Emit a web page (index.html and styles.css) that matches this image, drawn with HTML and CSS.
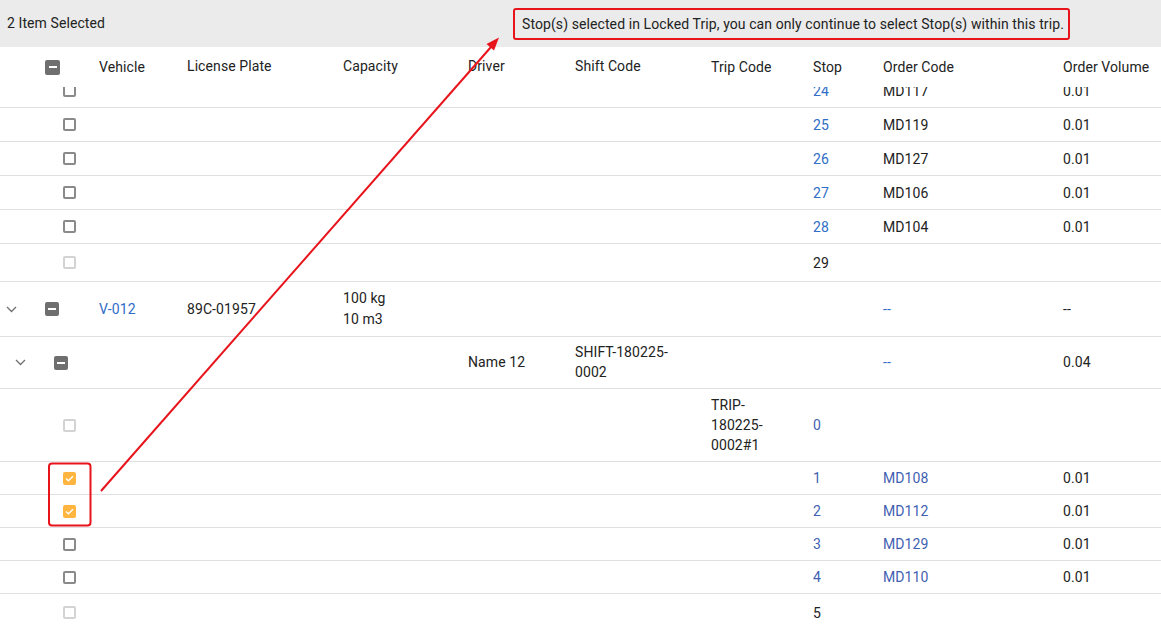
FILE: index.html
```html
<!DOCTYPE html>
<html>
<head>
<meta charset="utf-8">
<link rel="stylesheet" href="styles.css">
</head>
<body>
<div class="topbar">
  <span class="selected-count">2 Item Selected</span>
  <div class="notice">Stop(s) selected in Locked Trip, you can only continue to select Stop(s) within this trip.</div>
</div>

<div class="grid-row thead">
  <div class="sel"><span class="chev-slot"></span><span class="cb cb--ind cb--lg"></span></div>
  <div class="cell">Vehicle</div>
  <div class="cell cell--up">License Plate</div>
  <div class="cell cell--up">Capacity</div>
  <div class="cell cell--up">Driver</div>
  <div class="cell cell--up">Shift Code</div>
  <div class="cell">Trip Code</div>
  <div class="cell">Stop</div>
  <div class="cell">Order Code</div>
  <div class="cell">Order Volume</div>
</div>

<div class="tbody">
  <div class="grid-row row row--first">
    <div class="sel sel--l2"><span class="chev-slot"></span><span class="cb"></span></div>
    <div class="cell"></div><div class="cell"></div><div class="cell"></div><div class="cell"></div><div class="cell"></div><div class="cell"></div>
    <div class="cell link">24</div><div class="cell">MD117</div><div class="cell">0.01</div>
  </div>
  <div class="grid-row row">
    <div class="sel sel--l2"><span class="chev-slot"></span><span class="cb"></span></div>
    <div class="cell"></div><div class="cell"></div><div class="cell"></div><div class="cell"></div><div class="cell"></div><div class="cell"></div>
    <div class="cell link">25</div><div class="cell">MD119</div><div class="cell">0.01</div>
  </div>
  <div class="grid-row row">
    <div class="sel sel--l2"><span class="chev-slot"></span><span class="cb"></span></div>
    <div class="cell"></div><div class="cell"></div><div class="cell"></div><div class="cell"></div><div class="cell"></div><div class="cell"></div>
    <div class="cell link">26</div><div class="cell">MD127</div><div class="cell">0.01</div>
  </div>
  <div class="grid-row row">
    <div class="sel sel--l2"><span class="chev-slot"></span><span class="cb"></span></div>
    <div class="cell"></div><div class="cell"></div><div class="cell"></div><div class="cell"></div><div class="cell"></div><div class="cell"></div>
    <div class="cell link">27</div><div class="cell">MD106</div><div class="cell">0.01</div>
  </div>
  <div class="grid-row row">
    <div class="sel sel--l2"><span class="chev-slot"></span><span class="cb"></span></div>
    <div class="cell"></div><div class="cell"></div><div class="cell"></div><div class="cell"></div><div class="cell"></div><div class="cell"></div>
    <div class="cell link">28</div><div class="cell">MD104</div><div class="cell">0.01</div>
  </div>
  <div class="grid-row row row--end">
    <div class="sel sel--l2"><span class="chev-slot"></span><span class="cb cb--disabled"></span></div>
    <div class="cell"></div><div class="cell"></div><div class="cell"></div><div class="cell"></div><div class="cell"></div><div class="cell"></div>
    <div class="cell">29</div><div class="cell"></div><div class="cell"></div>
  </div>

  <div class="grid-row row">
    <div class="sel"><span class="chev-slot"><svg class="chev" width="11" height="7" viewBox="0 0 11 7"><path d="M1 1 L5.5 5.5 L10 1" fill="none" stroke="#707070" stroke-width="1.3"/></svg></span><span class="cb cb--ind"></span></div>
    <div class="cell link">V-012</div>
    <div class="cell">89C-01957</div>
    <div class="cell cap"><div>100 kg</div><div>10 m3</div></div>
    <div class="cell"></div><div class="cell"></div><div class="cell"></div><div class="cell"></div>
    <div class="cell link">--</div><div class="cell">--</div>
  </div>
  <div class="grid-row row row--shift">
    <div class="sel sel--l1"><span class="chev-slot"><svg class="chev" width="11" height="7" viewBox="0 0 11 7"><path d="M1 1 L5.5 5.5 L10 1" fill="none" stroke="#707070" stroke-width="1.3"/></svg></span><span class="cb cb--ind"></span></div>
    <div class="cell"></div><div class="cell"></div><div class="cell"></div>
    <div class="cell">Name 12</div>
    <div class="cell">SHIFT-180225-<br>0002</div>
    <div class="cell"></div><div class="cell"></div>
    <div class="cell link">--</div><div class="cell">0.04</div>
  </div>
  <div class="grid-row row">
    <div class="sel sel--l2"><span class="chev-slot"></span><span class="cb cb--disabled"></span></div>
    <div class="cell"></div><div class="cell"></div><div class="cell"></div><div class="cell"></div><div class="cell"></div>
    <div class="cell">TRIP-<br>180225-<br>0002#1</div>
    <div class="cell link link--alt">0</div><div class="cell"></div><div class="cell"></div>
  </div>
  <div class="grid-row row row--locked">
    <div class="sel sel--l2"><span class="chev-slot"></span><span class="cb cb--checked"><svg width="9" height="7" viewBox="0 0 9 7"><path d="M1 3.6 L3.4 5.8 L8 1.2" fill="none" stroke="#fff" stroke-width="1.3"/></svg></span></div>
    <div class="cell"></div><div class="cell"></div><div class="cell"></div><div class="cell"></div><div class="cell"></div><div class="cell"></div>
    <div class="cell link link--alt">1</div><div class="cell link link--alt">MD108</div><div class="cell">0.01</div>
  </div>
  <div class="grid-row row row--locked">
    <div class="sel sel--l2"><span class="chev-slot"></span><span class="cb cb--checked"><svg width="9" height="7" viewBox="0 0 9 7"><path d="M1 3.6 L3.4 5.8 L8 1.2" fill="none" stroke="#fff" stroke-width="1.3"/></svg></span></div>
    <div class="cell"></div><div class="cell"></div><div class="cell"></div><div class="cell"></div><div class="cell"></div><div class="cell"></div>
    <div class="cell link link--alt">2</div><div class="cell link link--alt">MD112</div><div class="cell">0.01</div>
  </div>
  <div class="grid-row row row--locked">
    <div class="sel sel--l2"><span class="chev-slot"></span><span class="cb"></span></div>
    <div class="cell"></div><div class="cell"></div><div class="cell"></div><div class="cell"></div><div class="cell"></div><div class="cell"></div>
    <div class="cell link link--alt">3</div><div class="cell link link--alt">MD129</div><div class="cell">0.01</div>
  </div>
  <div class="grid-row row row--locked">
    <div class="sel sel--l2"><span class="chev-slot"></span><span class="cb"></span></div>
    <div class="cell"></div><div class="cell"></div><div class="cell"></div><div class="cell"></div><div class="cell"></div><div class="cell"></div>
    <div class="cell link link--alt">4</div><div class="cell link link--alt">MD110</div><div class="cell">0.01</div>
  </div>
  <div class="grid-row row row--end">
    <div class="sel sel--l2"><span class="chev-slot"></span><span class="cb cb--disabled"></span></div>
    <div class="cell"></div><div class="cell"></div><div class="cell"></div><div class="cell"></div><div class="cell"></div><div class="cell"></div>
    <div class="cell">5</div><div class="cell"></div><div class="cell"></div>
  </div>
</div>

<svg class="annotation" width="1161" height="624" viewBox="0 0 1161 624">
  <rect x="49" y="463.5" width="41.5" height="62" rx="3" fill="none" stroke="#e8141c" stroke-width="2"/>
  <line x1="101" y1="491" x2="491" y2="47" stroke="#e8141c" stroke-width="2"/>
  <polygon points="499,37.5 494,50.5 486.5,44" fill="#e8141c"/>
</svg>
</body>
</html>
```

FILE: styles.css
```css
html, body {
  margin: 0;
  padding: 0;
}
body {
  width: 1161px;
  height: 624px;
  overflow: hidden;
  position: relative;
  background: #fff;
  font-family: Roboto, "Liberation Sans", Arial, sans-serif;
  font-size: 14px;
  letter-spacing: 0.09px;
  color: #222;
}

.topbar {
  height: 47px;
  background: #ebebeb;
  display: flex;
  align-items: center;
  padding-left: 7px;
}
.selected-count {
  margin-top: -2px;
}
.notice {
  margin-left: auto;
  margin-right: 91px;
  width: 557px;
  height: 32px;
  box-sizing: border-box;
  border: 2px solid #e8141c;
  border-radius: 3px;
  padding: 0 7px;
  display: flex;
  align-items: center;
  white-space: nowrap;
}

.grid-row {
  display: grid;
  grid-template-columns: 99px 88px 156px 125px 107px 136px 102px 70px 180px 1fr;
  align-items: center;
}
.thead {
  height: 40px;
  white-space: nowrap;
}
.thead .cell {
  padding-right: 0;
}
.cell--up {
  margin-top: -2px;
}
.tbody {
  height: 537px;
  overflow: hidden;
}
.row {
  box-sizing: border-box;
  min-height: 34px;
  padding: 6px 0;
  border-bottom: 1px solid #e0e0e0;
  line-height: 20px;
}
.row--first {
  margin-top: -13px;
}
.row--end {
  min-height: 38px;
}
.row--locked {
  min-height: 33px;
}
.row--shift {
  line-height: 19.5px;
}
.cap {
  line-height: 21px;
}
.cell {
  padding-right: 12px;
}

.link {
  color: #2f6dc6;
}
.link--alt {
  color: #3f5fb2;
}

.sel {
  display: flex;
  align-items: center;
}
.sel--l1 {
  padding-left: 9px;
}
.sel--l2 {
  padding-left: 18px;
}
.chev-slot {
  width: 45px;
  display: flex;
  align-items: center;
}
.chev {
  margin-left: 6px;
  display: block;
}

.cb {
  width: 13px;
  height: 13px;
  box-sizing: border-box;
  border: 2px solid #8a8a8a;
  border-radius: 2px;
  display: flex;
  align-items: center;
  justify-content: center;
}
.cb--disabled {
  border-color: #d3d3d3;
}
.cb--checked {
  background: #ffb53f;
  border-color: #ffb53f;
}
.cb--checked svg {
  display: block;
}
.cb--ind {
  width: 14px;
  height: 14px;
  border: none;
  background: #6f6f6f;
}
.cb--ind::after {
  content: "";
  width: 8px;
  height: 2px;
  background: #fff;
}
.cb--lg {
  width: 15px;
  height: 15px;
}

.annotation {
  position: absolute;
  left: 0;
  top: 0;
  pointer-events: none;
}
```
